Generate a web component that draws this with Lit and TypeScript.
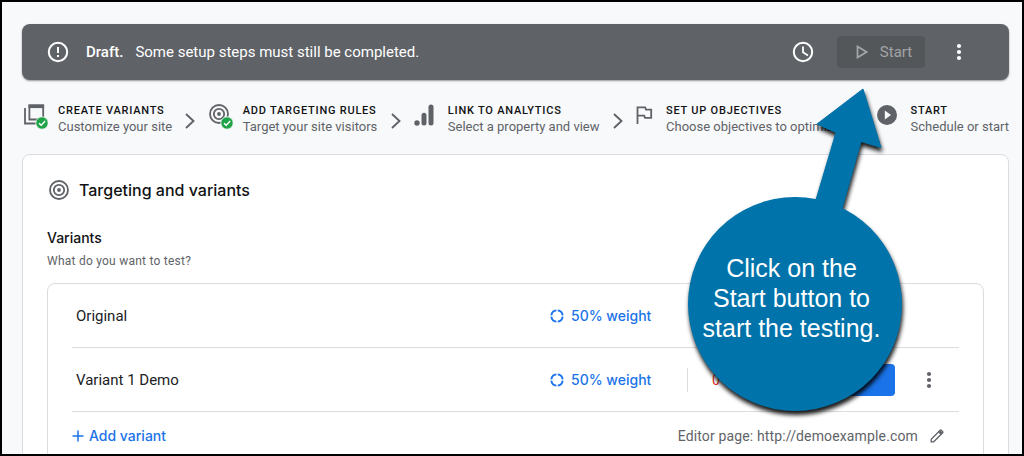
import { LitElement, html, css, svg, nothing, type TemplateResult } from "lit";
import { customElement, state } from "lit/decorators.js";

const targetRings = svg`
  <circle cx="10" cy="10" r="9" fill="none" stroke="currentColor" stroke-width="1.8"/>
  <circle cx="10" cy="10" r="5.2" fill="none" stroke="currentColor" stroke-width="1.8"/>
  <circle cx="10" cy="10" r="1.9" fill="currentColor"/>`;

const doneBadge = svg`
  <circle cx="18" cy="20" r="6.2" fill="#1ea446" stroke="#f8f9fb" stroke-width="0.8"/>
  <path d="M15 20.2l2.2 2.1 4-4.2" fill="none" stroke="#fff" stroke-width="1.5"/>`;

const icons: Record<string, TemplateResult> = {
  alert: html`<svg width="22" height="22" viewBox="0 0 22 22" aria-hidden="true">
    <circle cx="11" cy="11" r="9.2" fill="none" stroke="#fff" stroke-width="2"/>
    <path d="M11 6v6M11 14v2" stroke="#fff" stroke-width="2"/></svg>`,
  clock: html`<svg width="22" height="22" viewBox="0 0 22 22" aria-hidden="true">
    <circle cx="11" cy="11" r="9.2" fill="none" stroke="#fff" stroke-width="2"/>
    <path d="M11 5.5V11.2l5 3.2" fill="none" stroke="#fff" stroke-width="1.8"/></svg>`,
  play: html`<svg width="12" height="14" viewBox="0 0 12 14" aria-hidden="true">
    <path d="M1.5 1.5v11l9-5.5z" fill="none" stroke="currentColor" stroke-width="1.8"/></svg>`,
  more: html`<svg width="6" height="18" viewBox="0 0 6 18" aria-hidden="true">
    <circle cx="3" cy="3" r="2.1" fill="currentColor"/><circle cx="3" cy="9" r="2.1" fill="currentColor"/>
    <circle cx="3" cy="15" r="2.1" fill="currentColor"/></svg>`,
  variants: html`<svg width="24" height="27" viewBox="0 0 24 27" aria-hidden="true">
    <path d="M1 5v15.5h13" fill="none" stroke="currentColor" stroke-width="1.8"/>
    <path d="M5.400 2.500h13.800v14H5.400z" fill="none" stroke="currentColor" stroke-width="1.8"/>
    <path d="M4.500 1.500h15.600v3.600H4.500z" fill="currentColor"/>${doneBadge}</svg>`,
  targeting: html`<svg width="24" height="27" viewBox="0 0 24 27" aria-hidden="true">
    <g transform="translate(0 1)">${targetRings}</g>${doneBadge}</svg>`,
  target: html`<svg width="20" height="20" viewBox="0 0 20 20" aria-hidden="true">${targetRings}</svg>`,
  analytics: html`<svg width="24" height="27" viewBox="0 0 24 27" aria-hidden="true">
    <circle cx="3" cy="20" r="2.700" fill="currentColor"/>
    <path d="M10 12.300v7.700M17 4v16" stroke="currentColor" stroke-width="5" stroke-linecap="round"/></svg>`,
  flag: html`<svg width="20" height="27" viewBox="0 0 20 27" aria-hidden="true">
    <path d="M1.500 21V4.400h7.700l.8 2.300h5.200v8.200H9l-.8-2.300H1.500" fill="none" stroke="currentColor" stroke-width="1.8"/></svg>`,
  start: html`<svg width="24" height="27" viewBox="0 0 24 27" aria-hidden="true">
    <circle cx="10" cy="12" r="10" fill="currentColor"/><path d="M7.800 7.600v8.800l6.200-4.400z" fill="#f8f9fb"/></svg>`,
  chevron: html`<svg width="10" height="16" viewBox="0 0 10 16" aria-hidden="true">
    <path d="M1 1l7.500 7L1 15" fill="none" stroke="currentColor" stroke-width="1.9"/></svg>`,
  weight: html`<svg width="14" height="14" viewBox="0 0 14 14" aria-hidden="true">
    <circle cx="7" cy="7" r="5.7" pathLength="60" fill="none" stroke="currentColor" stroke-width="1.9"
      stroke-dasharray="12.6 2.4" stroke-dashoffset="-1.2"/></svg>`,
  plus: html`<svg width="12" height="12" viewBox="0 0 12 12" aria-hidden="true">
    <path d="M6 .5v11M.5 6h11" stroke="currentColor" stroke-width="1.5"/></svg>`,
  pencil: html`<svg width="14" height="14" viewBox="0 0 14 14" aria-hidden="true">
    <path d="M1.200 12.800v-2.500L10.200 1.300a.8.8 0 0 1 1.100 0l1.400 1.400a.8.8 0 0 1 0 1.100L3.700 12.800z" fill="none" stroke="currentColor" stroke-width="1.3"/>
    <path d="M8.200 3.300l2.500 2.500 1.900-2-2.400-2.400z" fill="currentColor"/></svg>`,
};

interface Step { icon: string; title: string; note: string; }
interface Variant { name: string; weight: number; editable: boolean; }

@customElement("setup-steps")
class SetupSteps extends LitElement {
  static styles = css`
    :host { display: block; }
    .steps { display: flex; justify-content: space-between; margin: 0; padding: 0 0 0 2px; list-style: none; }
    .step { display: flex; align-items: flex-start; gap: 10px; color: #5f6368; white-space: nowrap; }
    .step svg { flex: none; display: block; }
    .title { display: block; font-size: 11px; line-height: 16px; font-weight: 500; letter-spacing: 0.07em; color: #111214; text-transform: uppercase; }
    .note { display: block; font-size: 13px; line-height: 16px; }
    .sep { display: flex; align-items: center; color: #5f6368; padding-top: 4px; }
  `;
  @state() private steps: Step[] = [
    { icon: "variants", title: "Create variants", note: "Customize your site" },
    { icon: "targeting", title: "Add targeting rules", note: "Target your site visitors" },
    { icon: "analytics", title: "Link to Analytics", note: "Select a property and view" },
    { icon: "flag", title: "Set up objectives", note: "Choose objectives to optimize" },
    { icon: "start", title: "Start", note: "Schedule or start" },
  ];
  render() {
    return html`<ol class="steps">${this.steps.map((s, i) => html`
      ${i ? html`<li class="sep" aria-hidden="true">${icons.chevron}</li>` : nothing}
      <li class="step">${icons[s.icon]}<div><span class="title">${s.title}</span><span class="note">${s.note}</span></div></li>`)}
    </ol>`;
  }
}

@customElement("help-callout")
class HelpCallout extends LitElement {
  static styles = css`
    :host { display: block; position: absolute; top: 82px; right: 108px; width: 230px; height: 350px; pointer-events: none; }
    .shape { position: absolute; inset: 0; filter: drop-shadow(1px 4px 2px rgba(0, 0, 0, 0.9)); }
    .text { position: absolute; top: 169px; left: 0; width: 215px; margin: 0; text-align: center;
      font: 25px/30px "Liberation Sans", Arial, sans-serif; color: #fff; }
  `;
  render() {
    return html`
      <svg class="shape" width="230" height="350" viewBox="0 0 230 350" aria-hidden="true">
        <path d="M179 5L133 40l19 8.500-22 74 25 13 22-78 20 6z" fill="#0073aa" stroke="#0073aa" stroke-linejoin="round"/>
        <circle cx="111" cy="220" r="107" fill="#0073aa"/>
      </svg>
      <p class="text">Click on the<br>Start button to<br>start the testing.</p>`;
  }
}

@customElement("app-root")
class AppRoot extends LitElement {
  static styles = css`
    :host { display: block; font-family: Roboto, sans-serif; color: #202124; }
    *, *::before { box-sizing: border-box; }
    .frame { position: relative; height: 100vh; overflow: hidden; border: 2px solid #000; background: #f8f9fb; padding: 22px 13px 0 20px; }
    button { border: 0; background: none; padding: 0; font: inherit; color: inherit; display: inline-flex; align-items: center; justify-content: center; }
    svg { display: block; flex: none; }
    .bar { display: flex; align-items: center; height: 56px; padding: 0 38px 0 25px; border-radius: 8px; background: #5f6368; color: #fff; box-shadow: 0 1px 2px rgba(0, 0, 0, 0.4); font-size: 15px; }
    .status { flex: 1; display: flex; align-items: center; margin: 0; }
    .status strong { font-weight: 500; margin: 0 12px 0 17px; }
    .actions { display: flex; align-items: center; }
    .start { gap: 12px; width: 88px; height: 32px; margin: 0 22px 0 23px; padding-left: 6px; border-radius: 4px; background: #54575a; color: #a2a4a7; font-size: 15px; }
    .menu { width: 24px; height: 24px; }
    setup-steps { margin-top: 23px; }
    .card { margin-top: 19px; padding: 23px 24px 24px; border: 1px solid #dadce0; border-radius: 8px; background: #fff; }
    .heading { display: flex; align-items: center; gap: 10px; margin: 0; padding-left: 2px; font: 500 16px/24px Inter, sans-serif; color: #5f6368; }
    .heading span { color: #111214; }
    .sub { margin: 26px 0 0; font: 500 14px/20px Inter, sans-serif; color: #111214; }
    .hint { margin: 5px 0 0; font-size: 12px; line-height: 16px; color: #5f6368; letter-spacing: 0.02em; }
    .box { margin-top: 14px; padding: 0 24px; border: 1px solid #dadce0; border-radius: 8px; }
    .rows { margin: 0; padding: 0; list-style: none; }
    .row { display: grid; grid-template-columns: 1fr 137px 118px 90px 64px; align-items: center; height: 64px; padding-left: 4px; border-bottom: 1px solid #dadce0; font-size: 15px; }
    .blue { gap: 7px; justify-self: start; color: #1a73e8; font: 500 14px/20px Inter, sans-serif; }
    .changes { display: flex; align-items: center; height: 24px; padding-left: 24px; border-left: 1px solid #dadce0; color: #d93025; font-size: 14px; }
    .edit { height: 32px; border-radius: 4px; background: #1a73e8; color: #fff; font-size: 14px; font-weight: 500; }
    .row .menu { margin-left: 22px; color: #5f6368; }
    .foot { display: flex; align-items: center; justify-content: space-between; height: 48px; }
    .foot .blue { gap: 5px; }
    .editor { display: flex; align-items: center; gap: 12px; padding-right: 15px; color: #5f6368; font-size: 14px; letter-spacing: 0.01em; }
  `;
  @state() private variants: Variant[] = [
    { name: "Original", weight: 50, editable: false },
    { name: "Variant 1 Demo", weight: 50, editable: true },
  ];
  render() {
    return html`
      <main class="frame">
        <header class="bar">
          <p class="status">${icons.alert}<strong>Draft.</strong><span>Some setup steps must still be completed.</span></p>
          <div class="actions">
            <button aria-label="Schedule">${icons.clock}</button>
            <button class="start" disabled>${icons.play}Start</button>
            <button class="menu" aria-label="More options">${icons.more}</button>
          </div>
        </header>
        <setup-steps></setup-steps>
        <section class="card">
          <h2 class="heading">${icons.target}<span>Targeting and variants</span></h2>
          <h3 class="sub">Variants</h3>
          <p class="hint">What do you want to test?</p>
          <div class="box">
            <ul class="rows">${this.variants.map((v) => html`
              <li class="row">
                <span>${v.name}</span>
                <button class="blue">${icons.weight}${v.weight}% weight</button>
                ${v.editable ? html`
                  <span class="changes">0 changes</span>
                  <button class="edit">Edit</button>
                  <button class="menu" aria-label="Variant options">${icons.more}</button>` : nothing}
              </li>`)}
            </ul>
            <div class="foot">
              <button class="blue">${icons.plus}Add variant</button>
              <span class="editor">Editor page: http://demoexample.com<button aria-label="Edit page address">${icons.pencil}</button></span>
            </div>
          </div>
        </section>
        <help-callout></help-callout>
      </main>`;
  }
}
